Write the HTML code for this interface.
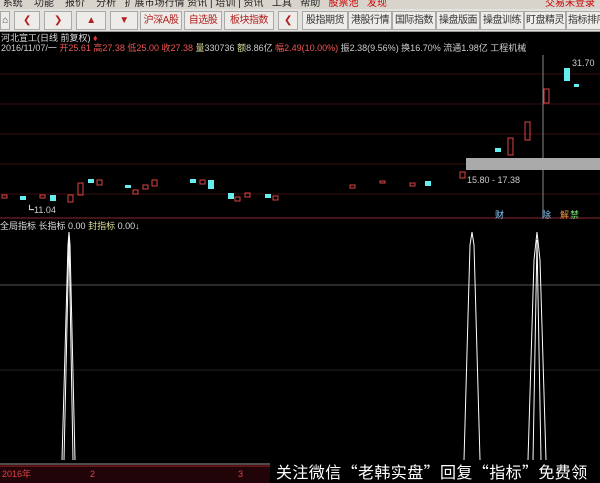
<!DOCTYPE html><html><head><meta charset="utf-8"><style>
body{margin:0;width:600px;height:483px;overflow:hidden;background:#000;font-family:"Liberation Sans","Noto Sans CJK SC",sans-serif;position:relative}
.menu{position:absolute;left:0;top:0;width:600px;height:9px;background:#d8d4cc;font-size:10px;line-height:8px;color:#222;overflow:hidden;white-space:nowrap}
.tb{position:absolute;left:0;top:9px;width:600px;height:22px;background:#e4e2de;border-bottom:1px solid #999;overflow:hidden}
.b{position:absolute;top:2px;height:17px;border:1px solid #aaa;background:#eeece8;font-size:10px;line-height:17px;text-align:center;color:#b02020;white-space:nowrap;overflow:hidden;letter-spacing:-0.5px}
.b2{color:#333}
.t{position:absolute;font-size:9px;white-space:nowrap;line-height:10px}
</style></head><body>
<div class="menu">&nbsp;系统 &nbsp;&nbsp; 功能 &nbsp;&nbsp; 报价 &nbsp;&nbsp; 分析 &nbsp; 扩展市场行情 资讯 | 培训 | 资讯 &nbsp; 工具 &nbsp; 帮助 &nbsp; <span style="color:#c00">股票池 &nbsp; 发现</span><span style="position:absolute;left:545px;color:#c00">交易未登录</span></div>
<div class="tb">
<div class="b" style="left:0;width:8px;color:#444">⌂</div>
<div class="b" style="left:14px;width:24px">❮</div>
<div class="b" style="left:44px;width:26px">❯</div>
<div class="b" style="left:76px;width:28px">▲</div>
<div class="b" style="left:110px;width:26px">▼</div>
<div class="b" style="left:140px;width:40px">沪深A股</div>
<div class="b" style="left:184px;width:36px">自选股</div>
<div class="b" style="left:224px;width:48px">板块指数</div>
<div class="b" style="left:278px;width:18px">❮</div>
<div class="b b2" style="left:302px;width:44px">股指期货</div>
<div class="b b2" style="left:348px;width:42px">港股行情</div>
<div class="b b2" style="left:392px;width:42px">国际指数</div>
<div class="b b2" style="left:436px;width:42px">操盘版面</div>
<div class="b b2" style="left:480px;width:42px">操盘训练</div>
<div class="b b2" style="left:524px;width:40px">盯盘精灵</div>
<div class="b b2" style="left:566px;width:40px">指标排序</div>
</div>
<div class="t" style="left:1px;top:33px;color:#ddd">河北宣工(日线 前复权) <span style="color:#e33">♦</span></div>
<div class="t" style="left:1px;top:43px;color:#ccc">2016/11/07/一 <span style="color:#e55">开25.61 高27.38 低25.00 收27.38</span> <span style="color:#dd9">量</span>330736 <span style="color:#dd9">额</span>8.86亿 <span style="color:#e55">幅2.49(10.00%)</span> 振2.38(9.56%) 换16.70% 流通1.98亿 工程机械</div>
<svg width="600" height="483" style="position:absolute;left:0;top:0">
<g stroke="#3a0c10" stroke-width="1">
<line x1="0" y1="74" x2="600" y2="74"/><line x1="0" y1="104" x2="600" y2="104"/><line x1="0" y1="134" x2="600" y2="134"/><line x1="0" y1="164" x2="600" y2="164"/><line x1="0" y1="194" x2="600" y2="194"/>
</g>
<line x1="0" y1="218" x2="600" y2="218" stroke="#8a2a30"/>
<line x1="0" y1="285" x2="600" y2="285" stroke="#555"/>
<line x1="0" y1="370" x2="600" y2="370" stroke="#222"/>
<line x1="543" y1="55" x2="543" y2="218" stroke="#888"/>
<rect x="466" y="158" width="134" height="12" fill="#aaa"/>
<g fill="none" stroke="#d44" stroke-width="1">
<rect x="2" y="195" width="5" height="3"/><rect x="40" y="195" width="5" height="3"/><rect x="68" y="195" width="5" height="7"/><rect x="78" y="183" width="5" height="12"/><rect x="97" y="180" width="5" height="5"/><rect x="133" y="190" width="5" height="4"/><rect x="143" y="185" width="5" height="4"/><rect x="152" y="180" width="5" height="6"/><rect x="200" y="180" width="5" height="4"/><rect x="235" y="197" width="5" height="4"/><rect x="245" y="193" width="5" height="4"/><rect x="273" y="196" width="5" height="4"/><rect x="350" y="185" width="5" height="3"/><rect x="380" y="181" width="5" height="2"/><rect x="410" y="183" width="5" height="3"/><rect x="460" y="172" width="5" height="6"/><rect x="508" y="138" width="5" height="17"/><rect x="525" y="122" width="5" height="18"/><rect x="544" y="89" width="5" height="14"/>
</g>
<g fill="#6ee" >
<rect x="20" y="196" width="6" height="4"/><rect x="50" y="195" width="6" height="6"/><rect x="88" y="179" width="6" height="4"/><rect x="125" y="185" width="6" height="3"/><rect x="190" y="179" width="6" height="4"/><rect x="208" y="180" width="6" height="9"/><rect x="228" y="193" width="6" height="6"/><rect x="265" y="194" width="6" height="4"/><rect x="425" y="181" width="6" height="5"/><rect x="495" y="148" width="6" height="4"/><rect x="564" y="68" width="6" height="13"/><rect x="574" y="84" width="5" height="3"/>
</g>
<g stroke="#fff" stroke-width="1" fill="none">
<polyline points="62,460 68,245 69,232 70,245 75,460"/>
<polyline points="64,460 69,235 73,460"/>
<polyline points="464,460 470,245 472,232 474,245 480,460"/>
<polyline points="528,460 534,260 537,232 540,260 546,460"/>
<polyline points="533,460 537,240 541,460"/>
</g>
<line x1="0" y1="464" x2="270" y2="464" stroke="#999"/>
<rect x="0" y="466" width="270" height="17" fill="#200408"/>
<line x1="0" y1="466" x2="270" y2="466" stroke="#a22"/>
</svg>
<div class="t" style="left:25px;top:205px;color:#ccc">┗11.04</div>
<div class="t" style="left:467px;top:175px;color:#ccc">15.80 - 17.38</div>
<div class="t" style="left:572px;top:58px;color:#ccc">31.70</div>
<div class="t" style="left:495px;top:210px;color:#8cf">财</div>
<div class="t" style="left:542px;top:210px;color:#8cf">除</div>
<div class="t" style="left:560px;top:210px;color:#e94">解</div><div class="t" style="left:570px;top:210px;color:#7d7">禁</div>
<div class="t" style="left:0;top:221px;color:#ddd">全局指标 <span>长指标 0.00</span> <span style="color:#dd9">封指标</span> 0.00↓</div>
<div class="t" style="left:2px;top:469px;color:#d44">2016年</div>
<div class="t" style="left:90px;top:469px;color:#d44">2</div>
<div class="t" style="left:238px;top:469px;color:#d44">3</div>
<div style="position:absolute;left:276px;top:461px;color:#fff;font-size:16px;line-height:20px;letter-spacing:0.4px;white-space:nowrap;font-family:'Noto Sans CJK SC',sans-serif">关注微信“老韩实盘”回复“指标”免费领</div>
</body></html>
